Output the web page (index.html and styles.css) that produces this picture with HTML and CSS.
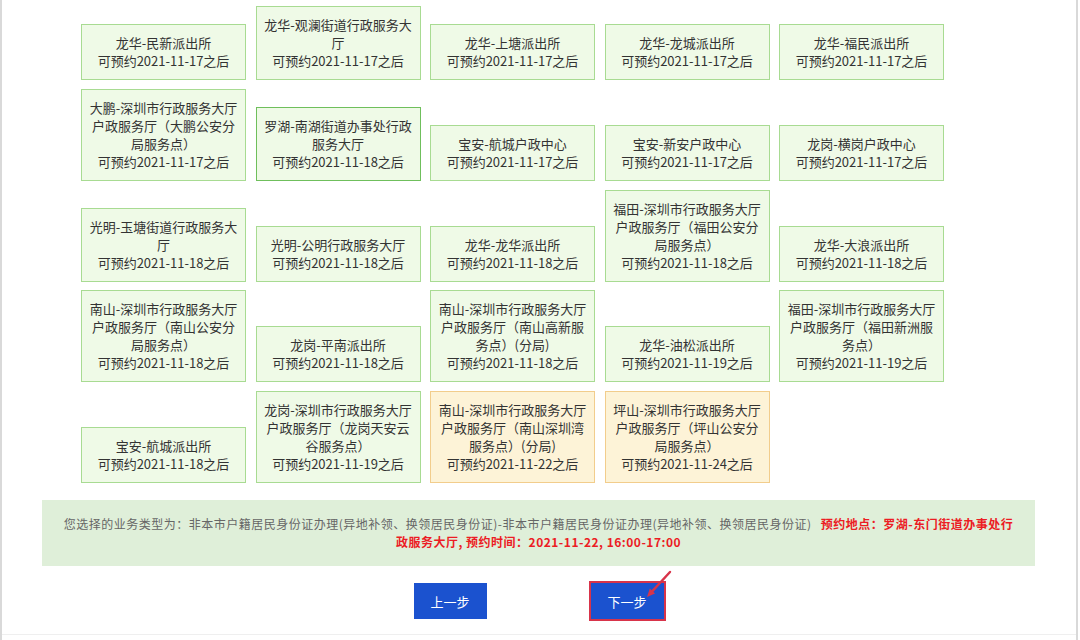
FILE: index.html
```html
<!DOCTYPE html>
<html lang="zh-CN">
<head>
  <meta charset="UTF-8" />
  <meta name="viewport" content="width=device-width, initial-scale=1.0" />
  <title>预约网点</title>
  <link rel="stylesheet" href="styles.css">
</head>
<body>

  <div class="page">
    <div class="content">
      <div class="station-list">
        <div class="station"><span>龙华-民新派出所</span><span class="date">可预约2021-11-17之后</span></div>
        <div class="station"><span>龙华-观澜街道行政服务大厅</span><span class="date">可预约2021-11-17之后</span></div>
        <div class="station"><span>龙华-上塘派出所</span><span class="date">可预约2021-11-17之后</span></div>
        <div class="station"><span>龙华-龙城派出所</span><span class="date">可预约2021-11-17之后</span></div>
        <div class="station"><span>龙华-福民派出所</span><span class="date">可预约2021-11-17之后</span></div>

        <div class="station"><span>大鹏-深圳市行政服务大厅户政服务厅（大鹏公安分局服务点）</span><span class="date">可预约2021-11-17之后</span></div>
        <div class="station selected"><span>罗湖-南湖街道办事处行政服务大厅</span><span class="date">可预约2021-11-18之后</span></div>
        <div class="station"><span>宝安-航城户政中心</span><span class="date">可预约2021-11-17之后</span></div>
        <div class="station"><span>宝安-新安户政中心</span><span class="date">可预约2021-11-17之后</span></div>
        <div class="station"><span>龙岗-横岗户政中心</span><span class="date">可预约2021-11-17之后</span></div>

        <div class="station"><span>光明-玉塘街道行政服务大厅</span><span class="date">可预约2021-11-18之后</span></div>
        <div class="station"><span>光明-公明行政服务大厅</span><span class="date">可预约2021-11-18之后</span></div>
        <div class="station"><span>龙华-龙华派出所</span><span class="date">可预约2021-11-18之后</span></div>
        <div class="station"><span>福田-深圳市行政服务大厅户政服务厅（福田公安分局服务点）</span><span class="date">可预约2021-11-18之后</span></div>
        <div class="station"><span>龙华-大浪派出所</span><span class="date">可预约2021-11-18之后</span></div>

        <div class="station"><span>南山-深圳市行政服务大厅户政服务厅（南山公安分局服务点）</span><span class="date">可预约2021-11-18之后</span></div>
        <div class="station"><span>龙岗-平南派出所</span><span class="date">可预约2021-11-18之后</span></div>
        <div class="station"><span>南山-深圳市行政服务大厅户政服务厅（南山高新服务点）(分局)</span><span class="date">可预约2021-11-18之后</span></div>
        <div class="station"><span>龙华-油松派出所</span><span class="date">可预约2021-11-19之后</span></div>
        <div class="station"><span>福田-深圳市行政服务大厅户政服务厅（福田新洲服务点）</span><span class="date">可预约2021-11-19之后</span></div>

        <div class="station"><span>宝安-航城派出所</span><span class="date">可预约2021-11-18之后</span></div>
        <div class="station"><span>龙岗-深圳市行政服务大厅户政服务厅（龙岗天安云谷服务点）</span><span class="date">可预约2021-11-19之后</span></div>
        <div class="station later"><span>南山-深圳市行政服务大厅户政服务厅（南山深圳湾服务点）(分局)</span><span class="date">可预约2021-11-22之后</span></div>
        <div class="station later"><span>坪山-深圳市行政服务大厅户政服务厅（坪山公安分局服务点）</span><span class="date">可预约2021-11-24之后</span></div>
      </div>

      <div class="summary">
        您选择的业务类型为：非本市户籍居民身份证办理(异地补领、换领居民身份证)-非本市户籍居民身份证办理(异地补领、换领居民身份证)
        <strong class="place">预约地点：罗湖-东门街道办事处行政服务大厅, 预约时间：2021-11-22, 16:00-17:00</strong>
      </div>

      <div class="actions">
        <button type="button" class="step-button">上一步</button>
        <div class="next-wrap">
          <button type="button" class="step-button next">下一步</button>
          <svg class="mark-arrow" width="32" height="32" viewBox="0 0 32 32">
            <line x1="28" y1="2" x2="10.4" y2="21.1" stroke="#d8344a" stroke-width="2.4" stroke-linecap="round" />
            <polygon points="5,27 13,23.6 7.8,18.6" fill="#d8344a" />
          </svg>
        </div>
      </div>
    </div>
  </div>

</body>
</html>
```

FILE: styles.css
```css
* {
  box-sizing: border-box;
  font-family: "Microsoft YaHei", "Noto Sans CJK SC", sans-serif;
}

body {
  margin: 0;
  padding: 0;
  background: #fff;
}

.page {
  width: 1078px;
  height: 640px;
  border-left: 2px solid #d9d9d9;
  border-right: 2px solid #d9d9d9;
  overflow: hidden;
}

.content {
  padding-bottom: 15px;
  border-bottom: 1px solid #efefef;
}

.station-list {
  display: flex;
  flex-wrap: wrap;
  align-items: flex-end;
  column-gap: 9.5px;
  row-gap: 8.75px;
  width: 942px;
  padding: 6px 0 0 79px;
}

.station {
  width: 165px;
  padding: 9px 6px;
  background: #effae7;
  border: 1px solid #a8db92;
  color: #333;
  font-size: 13px;
  line-height: 18px;
  text-align: center;
}

.station span {
  display: block;
}

.station.selected {
  border-color: #6fbf5c;
}

.station.later {
  background: #fdf3d7;
  border-color: #f2cd8c;
}

.summary {
  width: 993px;
  margin: 17px 0 0 40px;
  padding: 15px 18px;
  background: #dfefd9;
  color: #666;
  font-size: 12px;
  line-height: 18px;
  letter-spacing: 0.5px;
  text-align: center;
}

.summary .place {
  color: #ec1c24;
  font-weight: bold;
  margin-left: 6px;
}

.actions {
  display: flex;
  justify-content: center;
  gap: 104px;
  width: 993px;
  margin: 17px 0 0 40px;
}

.step-button {
  width: 73px;
  height: 36px;
  border: none;
  background-color: #1b52cf;
  color: #fff;
  font-size: 13px;
  cursor: pointer;
}

.next-wrap {
  position: relative;
}

.step-button.next {
  box-shadow: 0 0 0 2px #d8344a;
}

.mark-arrow {
  position: absolute;
  left: 51px;
  top: -13px;
}
```
